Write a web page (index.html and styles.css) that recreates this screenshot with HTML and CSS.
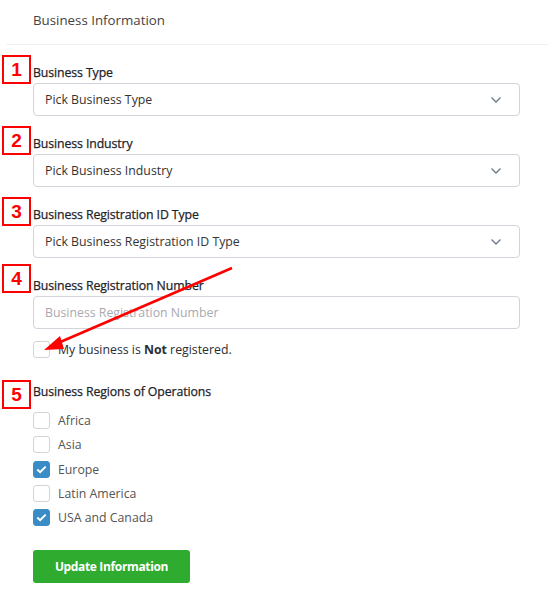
FILE: index.html
```html
<!DOCTYPE html>
<html>
<head>
<meta charset="utf-8">
<link rel="stylesheet" href="styles.css">
</head>
<body>
<div class="panel">
  <div class="panel-head">Business Information</div>
  <form class="form">
    <div class="field">
      <label class="label">Business Type</label>
      <div class="select"><span>Pick Business Type</span><svg class="chev" width="12" height="8" viewBox="0 0 12 8"><path d="M1.5 1.5 L6 6 L10.5 1.5" fill="none" stroke="#6b7a8a" stroke-width="1.3"/></svg></div>
    </div>
    <div class="field">
      <label class="label">Business Industry</label>
      <div class="select"><span>Pick Business Industry</span><svg class="chev" width="12" height="8" viewBox="0 0 12 8"><path d="M1.5 1.5 L6 6 L10.5 1.5" fill="none" stroke="#6b7a8a" stroke-width="1.3"/></svg></div>
    </div>
    <div class="field">
      <label class="label">Business Registration ID Type</label>
      <div class="select"><span>Pick Business Registration ID Type</span><svg class="chev" width="12" height="8" viewBox="0 0 12 8"><path d="M1.5 1.5 L6 6 L10.5 1.5" fill="none" stroke="#6b7a8a" stroke-width="1.3"/></svg></div>
    </div>
    <div class="field field-tight">
      <label class="label">Business Registration Number</label>
      <div class="input placeholder">Business Registration Number</div>
    </div>
    <div class="check-row check-single">
      <span class="box"></span><span class="check-text dark">My business is <b>Not</b> registered.</span>
    </div>
    <div class="field regions">
      <label class="label">Business Regions of Operations</label>
      <div class="check-list">
        <div class="check-row"><span class="box"></span><span class="check-text">Africa</span></div>
        <div class="check-row"><span class="box"></span><span class="check-text">Asia</span></div>
        <div class="check-row"><span class="box on"><svg width="11" height="9" viewBox="0 0 11 9"><path d="M1.3 4.6 L4.1 7.2 L9.7 1.6" fill="none" stroke="#fff" stroke-width="2"/></svg></span><span class="check-text">Europe</span></div>
        <div class="check-row"><span class="box"></span><span class="check-text">Latin America</span></div>
        <div class="check-row"><span class="box on"><svg width="11" height="9" viewBox="0 0 11 9"><path d="M1.3 4.6 L4.1 7.2 L9.7 1.6" fill="none" stroke="#fff" stroke-width="2"/></svg></span><span class="check-text">USA and Canada</span></div>
      </div>
    </div>
    <div class="btn">Update Information</div>
  </form>

  <div class="marker m1">1</div>
  <div class="marker m2">2</div>
  <div class="marker m3">3</div>
  <div class="marker m4">4</div>
  <div class="marker m5">5</div>
  <svg class="arrow" width="559" height="595" viewBox="0 0 559 595">
    <line x1="232" y1="268" x2="58" y2="343" stroke="#f00" stroke-width="2.6"/>
    <polygon points="44,350 60,336 64,349" fill="#f00"/>
  </svg>
</div>
</body>
</html>
```
FILE: styles.css
```css
* { box-sizing: border-box; }
html, body { margin: 0; padding: 0; background: #fff; }
body {
  font-family: "Open Sans", "Noto Sans", sans-serif;
  color: #333;
  width: 559px;
  height: 595px;
  overflow: hidden;
}
.panel { position: relative; width: 559px; height: 595px; }
.panel-head {
  margin: 0 11px 0 6px;
  height: 45px;
  padding: 10px 0 0 27px;
  font-size: 13.3px;
  line-height: 20px;
  color: #444;
  border-bottom: 1px solid #f0f0f2;
}
.form { padding: 19px 0 0 33px; width: 520px; display: flex; flex-direction: column; }
.field { display: flex; flex-direction: column; margin-bottom: 19px; }
.field-tight { margin-bottom: 12px; }
.label { font-size: 12.3px; font-weight: 400; line-height: 18px; color: #1f2328; margin-bottom: 1px; letter-spacing: -0.1px; -webkit-text-stroke: 0.25px #1f2328; }
.select, .input {
  height: 33px;
  border: 1px solid #d3d3db;
  border-radius: 4px;
  display: flex;
  align-items: center;
  justify-content: space-between;
  padding: 0 17px 0 11px;
  font-size: 12.3px;
  color: #333;
}
.placeholder { color: #a9a9b0; }
.chev { display: block; }
.check-row { display: flex; align-items: center; height: 17px; }
.check-single { margin-bottom: 25px; }
.box {
  width: 17px; height: 17px;
  border: 1px solid #d3d3db;
  border-radius: 3px;
  display: flex; align-items: center; justify-content: center;
  flex: none;
}
.box.on { background: #3a8cc6; border-color: #3a8cc6; }
.check-text { margin-left: 8px; font-size: 12.3px; color: #555; }
.check-text.dark { color: #2a2e33; }
.check-text b { font-weight: 700; }
.regions { margin-bottom: 24px; }
.check-list { display: flex; flex-direction: column; gap: 7.3px; margin-top: 10px; }
.btn {
  width: 157px; height: 33px;
  background: #2fac2f;
  border-radius: 3px;
  color: #fff;
  font-size: 12px;
  font-weight: 700;
  letter-spacing: -0.35px;
  display: flex; align-items: center; justify-content: center;
}
.marker {
  position: absolute;
  left: 2px;
  width: 29px; height: 29px;
  border: 2px solid #f00;
  color: #f00;
  font-family: "Liberation Sans", Arial, sans-serif;
  font-size: 19px;
  font-weight: 700;
  display: flex; align-items: center; justify-content: center;
  background: #fff;
}
.m1 { top: 55px; }
.m2 { top: 126px; }
.m3 { top: 197px; }
.m4 { top: 264px; }
.m5 { top: 380px; }
.arrow { position: absolute; left: 0; top: 0; pointer-events: none; }
```
